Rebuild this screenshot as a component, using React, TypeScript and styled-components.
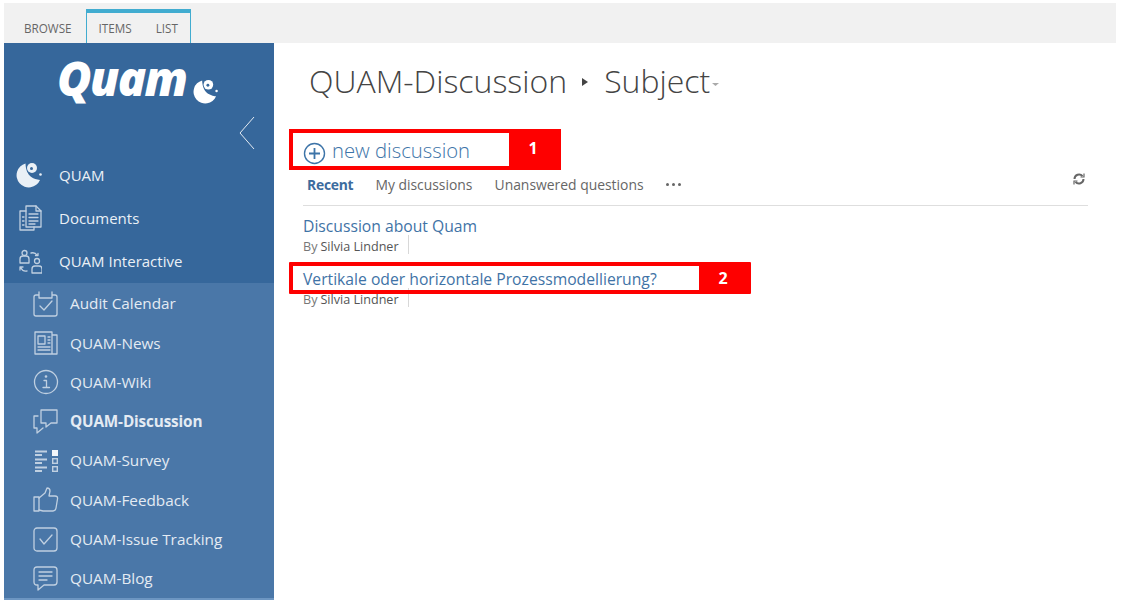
import React from "react";
import styled, { createGlobalStyle } from "styled-components";

const GlobalStyle = createGlobalStyle`
  html, body {
    margin: 0;
    padding: 0;
    background: #fff;
    font-family: "Open Sans", "Noto Sans", "Liberation Sans", sans-serif;
  }
`;

const Page = styled.div`
  width: 1123px;
  height: 603px;
  box-sizing: border-box;
  padding: 3px 7px 3px 4px;
  overflow: hidden;
`;

const Ribbon = styled.div`
  height: 40px;
  background: #f1f1f1;
  display: flex;
  align-items: flex-end;
  padding-left: 8px;
`;

const TabGroup = styled.div<{ $active?: boolean }>`
  display: flex;
  height: 34px;
  box-sizing: border-box;
  ${(p) =>
    p.$active
      ? `border: 1px solid #41acd0; border-top: 4px solid #41acd0; border-bottom: none;`
      : `padding: 4px 2px 0 0;`}
`;

const Tab = styled.div`
  height: 100%;
  display: flex;
  align-items: center;
  padding: 0 12px;
  font-size: 11.7px;
  color: #666;
  box-sizing: border-box;
`;

const Layout = styled.div`
  display: flex;
  height: 557px;
`;

const Sidebar = styled.nav`
  width: 270px;
  flex: none;
  background: #36679b;
  display: flex;
  flex-direction: column;
  color: #eaf0f6;
`;

const LogoRow = styled.div`
  height: 65px;
  box-sizing: border-box;
  display: flex;
  align-items: center;
  padding: 6px 0 0 53px;
  gap: 6px;
  color: #fff;
  svg {
    width: 25px;
    height: 25px;
    margin-top: 26px;
  }
`;

const LogoText = styled.span`
  font-size: 47px;
  font-weight: 800;
  font-style: italic;
  letter-spacing: -1.6px;
  line-height: 1;
`;

const CollapseRow = styled.div`
  height: 45px;
  display: flex;
  justify-content: flex-end;
  padding-right: 19px;
  box-sizing: border-box;
  align-items: flex-start;
  padding-top: 8px;
`;

const TopList = styled.div`
  display: flex;
  flex-direction: column;
  padding-top: 1px;
`;

const TopItem = styled.div`
  height: 43px;
  display: flex;
  align-items: center;
  padding-left: 12px;
  gap: 17px;
  font-size: 15px;
  svg {
    width: 26px;
    height: 26px;
    flex: none;
  }
`;

const SubList = styled.div`
  flex: 1;
  background: #4a77a8;
  border-bottom: 2px solid #6d96c2;
  display: flex;
  flex-direction: column;
  padding-top: 1px;
`;

const SubItem = styled.div<{ $current?: boolean }>`
  height: 39.3px;
  flex: none;
  display: flex;
  align-items: center;
  padding-left: 28px;
  gap: 11px;
  font-size: 15.3px;
  font-weight: ${(p) => (p.$current ? 700 : 400)};
  letter-spacing: ${(p) => (p.$current ? "-0.15px" : "0")};
  color: #e4ebf3;
  svg {
    width: 27px;
    height: 27px;
    flex: none;
  }
`;

const Main = styled.main`
  flex: 1;
  padding: 12px 28px 0 29px;
  position: relative;
  min-width: 0;
`;

const Title = styled.div`
  display: flex;
  align-items: center;
  height: 50px;
  margin-left: 6px;
  font-size: 32px;
  font-weight: 300;
  color: #444;
  white-space: nowrap;
`;

const Crumb = styled.svg`
  width: 6px;
  height: 8px;
  margin: 4px 16px 0 15px;
`;

const Caret = styled.svg`
  width: 7px;
  height: 3px;
  margin: 9px 0 0 2px;
`;

const NewRow = styled.div`
  display: flex;
  align-items: center;
  gap: 6px;
  margin-top: 24px;
  height: 42px;
  font-size: 20.3px;
  font-weight: 300;
  color: #3d74a8;
  svg {
    width: 23px;
    height: 23px;
    margin-top: 6px;
  }
`;

const Filters = styled.div`
  display: flex;
  align-items: center;
  height: 26px;
  gap: 22px;
  font-size: 13.9px;
  border-bottom: 1px solid #dedede;
  padding: 0 2px 8px 4px;
`;

const Filter = styled.span<{ $on?: boolean }>`
  color: ${(p) => (p.$on ? "#3d6c9e" : "#666")};
  font-weight: ${(p) => (p.$on ? 700 : 400)};
  letter-spacing: ${(p) => (p.$on ? "-0.25px" : "0")};
  white-space: nowrap;
`;

const Dots = styled.span`
  display: flex;
  gap: 3px;
  margin-top: 1px;
  i {
    width: 3px;
    height: 3px;
    border-radius: 50%;
    background: #666;
  }
`;

const Refresh = styled.svg`
  width: 14px;
  height: 14px;
  margin-left: auto;
  margin-top: -11px;
`;

const Discussion = styled.div`
  height: 53px;
  padding-top: 12px;
  box-sizing: border-box;
`;

const DiscussionTitle = styled.div`
  font-size: 15.7px;
  line-height: 16px;
  height: 16px;
  color: #3f73a6;
  white-space: nowrap;
`;

const Byline = styled.div`
  display: flex;
  width: fit-content;
  box-sizing: border-box;
  align-items: center;
  height: 19px;
  margin-top: 1px;
  padding: 3px 9px 0 0;
  font-size: 12.6px;
  color: #777;
  border-right: 1px solid #d8d8d8;
  b {
    font-weight: 400;
    color: #555;
    margin-left: 3px;
  }
`;

const Callout = styled.div`
  position: absolute;
  display: flex;
  justify-content: flex-end;
  box-sizing: border-box;
  border: 4px solid #fe0000;
  pointer-events: none;
`;

const CalloutOne = styled(Callout)`
  left: 15px;
  top: 86px;
  width: 272px;
  height: 41px;
`;

const CalloutTwo = styled(Callout)`
  left: 15px;
  top: 219px;
  width: 462px;
  height: 32px;
  border-radius: 1px;
`;

const Badge = styled.div<{ $lift?: number }>`
  width: 48px;
  box-sizing: border-box;
  background: #fe0000;
  color: #fff;
  font-weight: 700;
  font-size: 16px;
  padding-bottom: ${(p) => p.$lift ?? 0}px;
  display: flex;
  align-items: center;
  justify-content: center;
`;

const QuamMark = () => (
  <svg viewBox="0 0 26 26" fill="currentColor">
    <path d="M9.500 1.500A12.200 12.200 0 1 0 24 18C18 17 10 15 9.500 1.500z" />
    <circle cx="16" cy="6" r="5" />
    <circle cx="15.500" cy="6.500" r="1.500" fill="#36679b" />
    <circle cx="24.500" cy="12.500" r="1.300" />
  </svg>
);

const line = { fill: "none", stroke: "#c0d0e1", strokeWidth: 1.3, strokeLinecap: "round", strokeLinejoin: "round" } as const;

const DocumentsIcon = () => (
  <svg viewBox="0 0 26 26" {...line}>
    <path d="M10 6H4v19h14v-3" />
    <path d="M10 1h10l5 5v16H10z" />
    <path d="M20 1v5h5M13 9h9M13 12.500h9M13 16h9M13 19h6M6.500 12h1.500M6.500 16h1.500M6.500 20h1.500" />
  </svg>
);

const InteractiveIcon = () => (
  <svg viewBox="0 0 26 26" {...line}>
    <circle cx="8.500" cy="5" r="2.500" />
    <path d="M4 15v-4q0-3 3-3h3q3 0 3 3v4z" />
    <circle cx="21" cy="13" r="2.500" />
    <path d="M16 25v-4q0-3 3-3h4q3 0 3 3v4z" />
    <path d="M15 5q4-1 6 2M19.500 7.500h2.500v-2M11 23q-4 1-6-3M4 22v-3h3" />
  </svg>
);

const CalendarIcon = () => (
  <svg viewBox="0 0 27 27" {...line}>
    <path d="M7 5H4q-2 0-2 2v17q0 2 2 2h19q2 0 2-2V7q0-2-2-2h-3M7 2v6h13V2" />
    <path d="M8 16l4 4 8-9" />
  </svg>
);

const NewsIcon = () => (
  <svg viewBox="0 0 27 27" {...line}>
    <path d="M3 3h17v22H3zM20 6h5v19h-5" />
    <path d="M6 7h7v8H6zM16 8h2M16 11h2M16 14h2M6 18h12M6 21h12" />
  </svg>
);

const InfoIcon = () => (
  <svg viewBox="0 0 27 27" {...line}>
    <circle cx="14" cy="14" r="11.500" />
    <path d="M12 12.500h2.500V19M11 19.500h6.500" />
    <circle cx="14" cy="8.500" r="0.700" />
  </svg>
);

const DiscussionIcon = () => (
  <svg viewBox="0 0 27 27" {...line}>
    <path d="M9 2h16v13h-6l-5 4v-4H9z" />
    <path d="M6 8H2v12h3v5l6-5" />
  </svg>
);

const SurveyIcon = () => (
  <svg viewBox="0 0 27 27" fill="#c0d0e1">
    <rect x="3" y="3.500" width="12" height="2" />
    <rect x="3" y="7" width="7" height="2" />
    <rect x="3" y="11.500" width="12" height="2" />
    <rect x="3" y="15" width="7" height="2" />
    <rect x="3" y="19.500" width="12" height="2" />
    <rect x="3" y="23" width="7" height="2" />
    <rect x="20" y="3" width="6" height="6" fill="#f2f6fa" />
    <rect x="20.700" y="11.700" width="4.600" height="4.600" fill="none" stroke="#c0d0e1" strokeWidth="1.400" />
    <rect x="20.700" y="19.700" width="4.600" height="4.600" fill="none" stroke="#c0d0e1" strokeWidth="1.400" />
  </svg>
);

const ThumbIcon = () => (
  <svg viewBox="0 0 27 27" {...line}>
    <path d="M2 11h5v14H2z" />
    <path d="M7 12l6-5 2-5q3 0 3 3l-1 5h6q3 0 2.500 3l-1.500 9q-.5 3-3 3H11l-4-1" />
  </svg>
);

const CheckboxIcon = () => (
  <svg viewBox="0 0 27 27" {...line}>
    <rect x="2" y="2" width="23" height="23" rx="3" />
    <path d="M8 13l4 5 8-9" />
  </svg>
);

const BlogIcon = () => (
  <svg viewBox="0 0 27 27" {...line}>
    <path d="M5 2h17q3 0 3 3v12q0 3-3 3H12l-6 5v-5H5q-3 0-3-3V5q0-3 3-3z" />
    <path d="M7 7h13M7 11h13M7 15h8" />
  </svg>
);

const subItems: { label: string; icon: React.ReactNode; current?: boolean }[] = [
  { label: "Audit Calendar", icon: <CalendarIcon /> },
  { label: "QUAM-News", icon: <NewsIcon /> },
  { label: "QUAM-Wiki", icon: <InfoIcon /> },
  { label: "QUAM-Discussion", icon: <DiscussionIcon />, current: true },
  { label: "QUAM-Survey", icon: <SurveyIcon /> },
  { label: "QUAM-Feedback", icon: <ThumbIcon /> },
  { label: "QUAM-Issue Tracking", icon: <CheckboxIcon /> },
  { label: "QUAM-Blog", icon: <BlogIcon /> },
];

export default function App() {
  return (
    <Page>
      <GlobalStyle />
      <Ribbon>
        <TabGroup>
          <Tab>BROWSE</Tab>
        </TabGroup>
        <TabGroup $active>
          <Tab>ITEMS</Tab>
          <Tab>LIST</Tab>
        </TabGroup>
      </Ribbon>
      <Layout>
        <Sidebar>
          <LogoRow>
            <LogoText>Quam</LogoText>
            <QuamMark />
          </LogoRow>
          <CollapseRow>
            <svg width="16" height="34" viewBox="0 0 16 34" fill="none" stroke="#e4ebf3" strokeWidth="1">
              <path d="M15 1L1 17l14 16" />
            </svg>
          </CollapseRow>
          <TopList>
            <TopItem>
              <QuamMark />
              QUAM
            </TopItem>
            <TopItem>
              <DocumentsIcon />
              Documents
            </TopItem>
            <TopItem>
              <InteractiveIcon />
              QUAM Interactive
            </TopItem>
          </TopList>
          <SubList>
            {subItems.map((item) => (
              <SubItem key={item.label} $current={item.current}>
                {item.icon}
                {item.label}
              </SubItem>
            ))}
          </SubList>
        </Sidebar>
        <Main>
          <Title>
            QUAM-Discussion
            <Crumb viewBox="0 0 6 8" fill="#444">
              <path d="M0 0l6 4-6 4z" />
            </Crumb>
            Subject
            <Caret viewBox="0 0 7 3" fill="#aaa">
              <path d="M0 0h7L3.500 3z" />
            </Caret>
          </Title>
          <NewRow>
            <svg viewBox="0 0 23 23" fill="none" stroke="#3d74a8" strokeWidth="1.400">
              <circle cx="11.500" cy="11.500" r="10" />
              <path d="M11.500 6v11M6 11.500h11" strokeWidth="1.800" />
            </svg>
            new discussion
          </NewRow>
          <Filters>
            <Filter $on>Recent</Filter>
            <Filter>My discussions</Filter>
            <Filter>Unanswered questions</Filter>
            <Dots>
              <i />
              <i />
              <i />
            </Dots>
            <Refresh viewBox="0 0 14 14" fill="none" stroke="#666" strokeWidth="2">
              <path d="M2.500 7a4.500 4.500 0 0 1 8-2.800M11.500 7a4.500 4.500 0 0 1-8 2.800" />
              <path d="M12 1.500v3.500H8.500M2 12.500V9h3.500" strokeWidth="1.200" />
            </Refresh>
          </Filters>
          <Discussion>
            <DiscussionTitle>Discussion about Quam</DiscussionTitle>
            <Byline>
              By <b>Silvia Lindner</b>
            </Byline>
          </Discussion>
          <Discussion>
            <DiscussionTitle>Vertikale oder horizontale Prozessmodellierung?</DiscussionTitle>
            <Byline>
              By <b>Silvia Lindner</b>
            </Byline>
          </Discussion>
          <CalloutOne>
            <Badge $lift={3}>1</Badge>
          </CalloutOne>
          <CalloutTwo>
            <Badge>2</Badge>
          </CalloutTwo>
        </Main>
      </Layout>
    </Page>
  );
}
